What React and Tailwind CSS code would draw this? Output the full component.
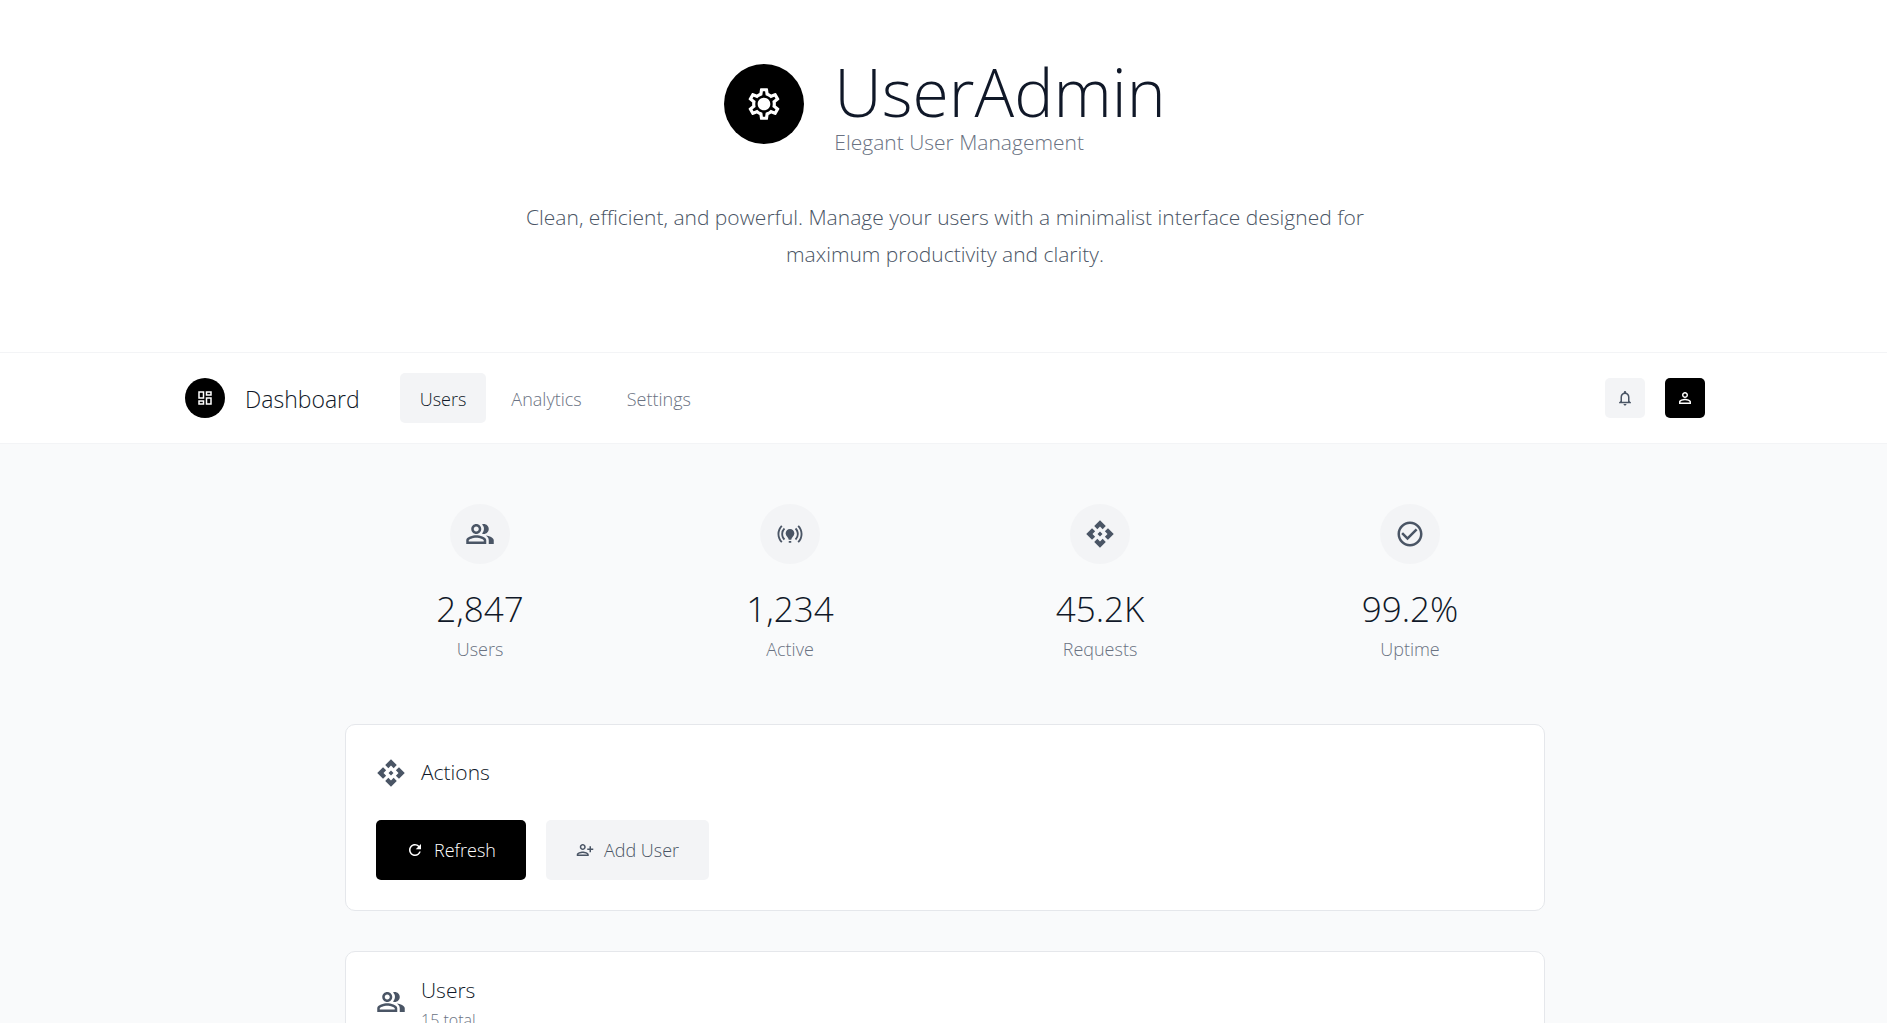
import {
  MdApi,
  MdCheckCircleOutline,
  MdOnlinePrediction,
  MdOutlineDashboard,
  MdOutlineNotifications,
  MdOutlinePeopleAlt,
  MdOutlineSettings,
  MdPersonAddAlt,
  MdPersonOutline,
  MdRefresh,
} from "react-icons/md";

const stats = [
  { icon: MdOutlinePeopleAlt, value: "2,847", label: "Users" },
  { icon: MdOnlinePrediction, value: "1,234", label: "Active" },
  { icon: MdApi, value: "45.2K", label: "Requests" },
  { icon: MdCheckCircleOutline, value: "99.2%", label: "Uptime" },
];

const tabs = ["Users", "Analytics", "Settings"];

// Outlined gear with a solid hub
function GearIcon() {
  return (
    <svg viewBox="0 0 24 24" className="size-[38px]" fill="currentColor" aria-hidden="true">
      <MdOutlineSettings size={24} />
      <circle cx="12" cy="12" r="3.6" />
    </svg>
  );
}

function Hero() {
  return (
    <header className="border-b border-gray-100 bg-white pt-[53px] pb-[79px] pl-[3px]">
      <div className="flex items-center justify-center gap-[30px]">
        <div className="flex size-20 items-center justify-center rounded-full bg-black text-white">
          <GearIcon />
        </div>
        <div>
          <h1 className="text-[66px] leading-[76px] text-gray-900">UserAdmin</h1>
          <p className="text-[21px] leading-[26px] text-gray-500">Elegant User Management</p>
        </div>
      </div>
      <p className="mx-auto mt-11 max-w-[860px] text-center text-[21px] leading-[37px] text-gray-600">
        Clean, efficient, and powerful. Manage your users with a minimalist interface designed for
        maximum productivity and clarity.
      </p>
    </header>
  );
}

function NavBar() {
  return (
    <nav className="border-b border-gray-100 bg-white py-5 pl-[3px]">
      <div className="mx-auto flex max-w-[1600px] items-center justify-between px-10">
        <div className="flex items-center gap-10">
          <div className="flex items-center gap-5">
            <div className="flex size-10 items-center justify-center rounded-full bg-black text-white">
              <MdOutlineDashboard className="size-[18px]" />
            </div>
            <span className="pt-0.5 text-[23px] leading-[35px] text-gray-900">Dashboard</span>
          </div>
          <div className="flex gap-[5px]">
            {tabs.map((tab, i) => (
              <button
                key={tab}
                type="button"
                className={
                  i === 0
                    ? "h-[50px] rounded-[5px] bg-gray-100 px-5 pt-0.5 text-[18px] text-gray-900"
                    : "h-[50px] rounded-[5px] px-5 pt-0.5 text-[18px] text-gray-500"
                }
              >
                {tab}
              </button>
            ))}
          </div>
        </div>
        <div className="flex gap-5">
          <button
            type="button"
            aria-label="Notifications"
            className="flex size-10 items-center justify-center rounded-[5px] bg-gray-100 text-gray-600"
          >
            <MdOutlineNotifications className="size-[18px]" />
          </button>
          <button
            type="button"
            aria-label="Account"
            className="flex size-10 items-center justify-center rounded-[5px] bg-black text-white"
          >
            <MdPersonOutline className="size-[18px]" />
          </button>
        </div>
      </div>
    </nav>
  );
}

function Stat({ icon: Icon, value, label }) {
  return (
    <div className="flex flex-col items-center">
      <div className="mb-5 flex size-[60px] items-center justify-center rounded-full bg-gray-100 text-gray-600">
        <Icon className="size-[30px]" />
      </div>
      <div className="text-[35px] leading-[50px] text-gray-900">{value}</div>
      <div className="text-[18px] leading-[30px] text-gray-500">{label}</div>
    </div>
  );
}

export default function App() {
  return (
    <div className="min-h-screen bg-gray-50 font-['Open_Sans',sans-serif] font-light">
      <Hero />
      <NavBar />
      <main className="py-[60px] pl-[3px]">
        <div className="mx-auto max-w-[1200px]">
          <section className="grid grid-cols-4 gap-10">
            {stats.map((s) => (
              <Stat key={s.label} {...s} />
            ))}
          </section>

          <section className="mt-[60px] rounded-[10px] border border-gray-200 bg-white p-[30px]">
            <div className="mb-[30px] flex items-center gap-[15px]">
              <MdApi className="size-[30px] text-gray-600" />
              <h2 className="text-[21px] leading-[35px] text-gray-900">Actions</h2>
            </div>
            <div className="flex gap-5">
              <button
                type="button"
                className="flex h-[60px] items-center gap-[10px] rounded-[5px] bg-black px-[30px] text-[18px] text-white"
              >
                <MdRefresh className="size-[18px]" />
                Refresh
              </button>
              <button
                type="button"
                className="flex h-[60px] items-center gap-[10px] rounded-[5px] bg-gray-100 px-[30px] text-[18px] text-gray-600"
              >
                <MdPersonAddAlt className="size-[18px]" />
                Add User
              </button>
            </div>
          </section>

          <section className="mt-10 rounded-[10px] border border-gray-200 bg-white px-[30px] py-5">
            <div className="flex items-center gap-[15px]">
              <MdOutlinePeopleAlt className="size-[30px] text-gray-600" />
              <div>
                <h2 className="text-[21px] leading-9 text-gray-900">Users</h2>
                <p className="text-[16px] leading-6 text-gray-500">15 total</p>
              </div>
            </div>
          </section>
        </div>
      </main>
    </div>
  );
}
